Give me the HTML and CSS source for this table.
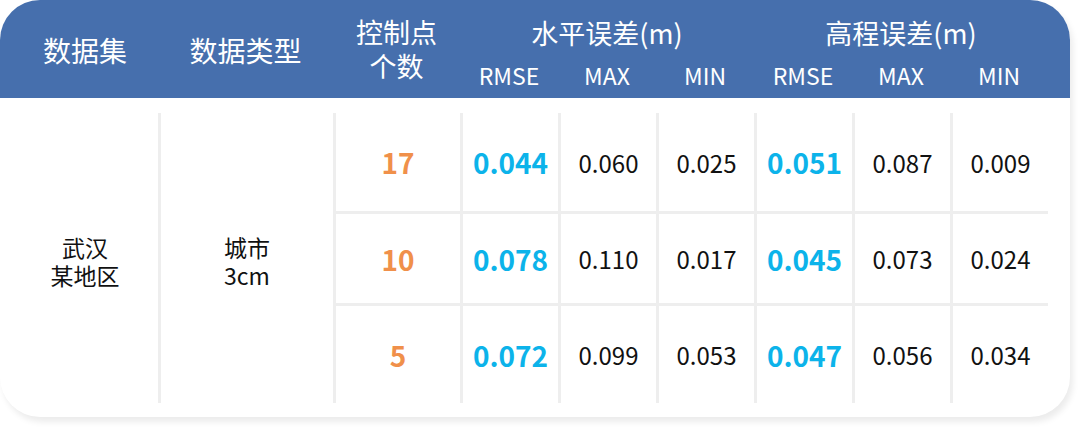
FILE: index.html
```html
<!DOCTYPE html>
<html lang="zh">
<head>
<meta charset="utf-8">
<link rel="stylesheet" href="styles.css">
</head>
<body>
<div class="card">
  <div class="head">
    <div class="h-span c0">数据集</div>
    <div class="h-span c1">数据类型</div>
    <div class="h-span c2 two">控制点<br>个数</div>
    <div class="h-group g1">水平误差(m)</div>
    <div class="h-group g2">高程误差(m)</div>
    <div class="h-sub">RMSE</div>
    <div class="h-sub">MAX</div>
    <div class="h-sub">MIN</div>
    <div class="h-sub">RMSE</div>
    <div class="h-sub">MAX</div>
    <div class="h-sub">MIN</div>
  </div>
  <div class="body">
    <div class="cell dataset">武汉<br>某地区</div>
    <div class="cell dtype">城市<br>3cm</div>

    <div class="cell num line">17</div>
    <div class="cell blue line">0.044</div>
    <div class="cell val line">0.060</div>
    <div class="cell val line">0.025</div>
    <div class="cell blue line">0.051</div>
    <div class="cell val line">0.087</div>
    <div class="cell val line">0.009</div>

    <div class="cell num line top">10</div>
    <div class="cell blue line top">0.078</div>
    <div class="cell val line top">0.110</div>
    <div class="cell val line top">0.017</div>
    <div class="cell blue line top">0.045</div>
    <div class="cell val line top">0.073</div>
    <div class="cell val line top">0.024</div>

    <div class="cell num line top">5</div>
    <div class="cell blue line top">0.072</div>
    <div class="cell val line top">0.099</div>
    <div class="cell val line top">0.053</div>
    <div class="cell blue line top">0.047</div>
    <div class="cell val line top">0.056</div>
    <div class="cell val line top">0.034</div>
  </div>
</div>
</body>
</html>
```

FILE: styles.css
```css
html, body {
  margin: 0;
  padding: 0;
  background: #ffffff;
}
body {
  width: 1080px;
  height: 427px;
  font-family: "Noto Sans CJK SC", "Noto Sans", sans-serif;
}
.card {
  width: 1070px;
  height: 417px;
  background: #ffffff;
  border-radius: 40px;
  box-shadow: 3px 5px 6px rgba(0, 0, 0, 0.08);
  overflow: hidden;
}
.head {
  height: 98px;
  background: #466fad;
  color: #ffffff;
  display: grid;
  grid-template-columns: 146px 175px 127px repeat(6, 98px);
  grid-template-rows: 52px 46px;
  padding-left: 12px;
}
.h-span {
  grid-row: 1 / 3;
  display: flex;
  align-items: center;
  justify-content: center;
  font-size: 28px;
  padding-top: 2px;
}
.h-span.two {
  text-align: center;
  line-height: 34px;
  font-size: 27px;
  padding-top: 0;
}
.h-group {
  grid-row: 1;
  grid-column: span 3;
  text-align: center;
  font-size: 27px;
  line-height: 38px;
  padding-top: 14px;
}
.h-sub {
  grid-row: 2;
  text-align: center;
  font-size: 23px;
  line-height: 46px;
}
.body {
  display: grid;
  grid-template-columns: 146px 175px 127px repeat(6, 98px);
  grid-template-rows: 98px 92px 100px;
  padding: 15px 0 14px 12px;
}
.cell {
  display: flex;
  align-items: center;
  justify-content: center;
  text-align: center;
  box-sizing: border-box;
}
.dataset {
  grid-row: 1 / 4;
  grid-column: 1;
  font-size: 23px;
  line-height: 28px;
  color: #111111;
  padding-top: 6px;
}
.dtype {
  grid-row: 1 / 4;
  grid-column: 2;
  font-size: 23px;
  line-height: 28px;
  color: #111111;
  border-left: 3px solid #eeeeee;
  padding-top: 6px;
}
.line {
  border-left: 3px solid #eeeeee;
}
.top {
  border-top: 3px solid #eeeeee;
}
.num {
  color: #f0904a;
  font-weight: 700;
  font-size: 28px;
}
.blue {
  color: #0cb3ea;
  font-weight: 700;
  font-size: 28px;
}
.val {
  color: #111111;
  font-size: 24px;
}
```
